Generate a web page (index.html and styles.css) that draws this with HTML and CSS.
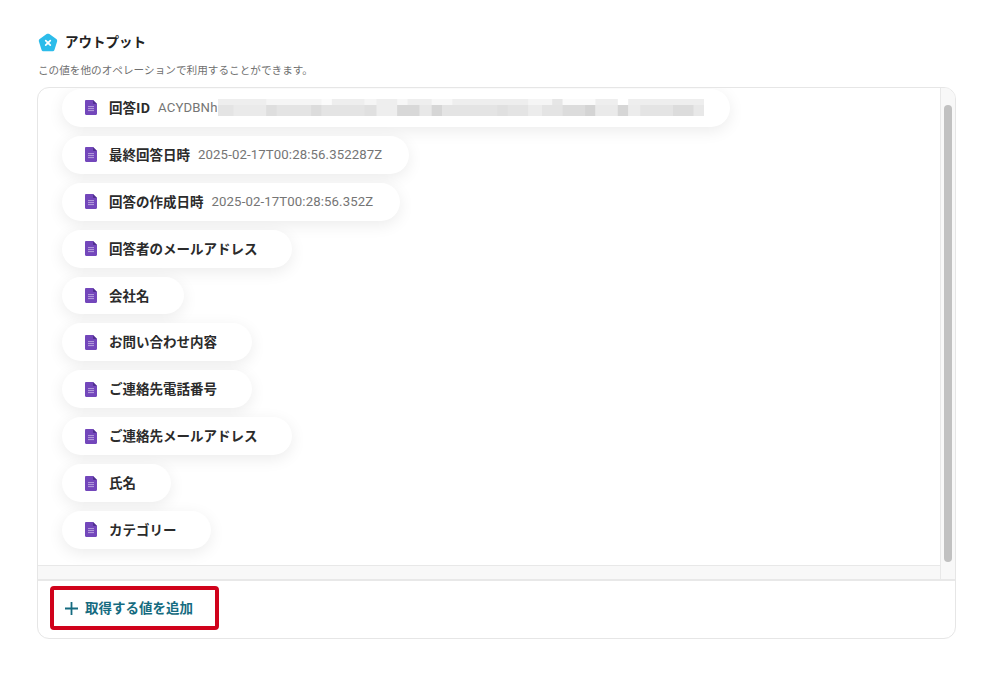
FILE: index.html
```html
<!DOCTYPE html>
<html lang="ja">
<head>
<meta charset="utf-8">
<title>アウトプット</title>
<link rel="stylesheet" href="styles.css">
</head>
<body>
<svg class="defs" width="0" height="0" aria-hidden="true">
  <symbol id="doc" viewBox="0 0 12 15">
    <path d="M1.2 0H8L12 4V13.8C12 14.5 11.5 15 10.8 15H1.2C.5 15 0 14.5 0 13.8V1.2C0 .5 .5 0 1.2 0Z" fill="#7347bb"/>
    <path d="M8 0L12 4H9C8.4 4 8 3.6 8 3Z" fill="#50308f"/>
    <path d="M3 6.600H9M3 8.600H9M3 10.600H9" stroke="#b7a2dc" stroke-width="1"/>
  </symbol>
</svg>
<main class="page">
  <header class="head">
    <svg class="logo" viewBox="0 0 20 20" width="20" height="20" aria-hidden="true">
      <path d="M8.600 1.100C9.400.5 10.600.5 11.400 1.100L18.300 6.100C19.100 6.700 19.400 7.700 19.100 8.600L16.500 16.700C16.200 17.600 15.300 18.300 14.300 18.300H5.700C4.700 18.300 3.800 17.600 3.500 16.700L.9 8.600C.6 7.700.9 6.700 1.700 6.100Z" fill="#2cbcea"/>
      <path d="M7.700 7.600L12.300 12.200M12.300 7.600L7.700 12.200" stroke="#fff" stroke-width="1.700" stroke-linecap="round"/>
    </svg>
    <h1 class="title">アウトプット</h1>
  </header>
  <p class="sub">この値を他のオペレーションで利用することができます。</p>
  <section class="box">
    <div class="scroll">
      <div class="main-col">
        <ul class="list">
          <li class="chip chip-secret"><svg class="ic"><use href="#doc"/></svg><b class="name">回答ID</b><span class="val">ACYDBNh</span>
            <svg class="mosaic" width="486" height="17" viewBox="0 0 1410 17" preserveAspectRatio="none" aria-hidden="true">
              <rect width="1410" height="6" fill="#eeeeee"/>
              <rect x="140" width="190" height="6" fill="#f5f5f5"/>
              <rect x="300" width="30" height="6" fill="#fbfbfb"/>
              <rect x="425" width="35" height="6" fill="#f5f5f5"/>
              <rect x="520" width="30" height="6" fill="#f7f7f7"/>
              <rect x="620" width="60" height="6" fill="#f7f7f7"/>
              <rect x="900" width="70" height="6" fill="#f5f5f5"/>
              <rect x="970" width="30" height="6" fill="#e6e6e6"/>
              <rect x="1000" width="95" height="6" fill="#fafafa"/>
              <rect x="1160" width="30" height="6" fill="#ffffff"/>
              <rect y="6" width="1410" height="11" fill="#e4e4e4"/>
              <rect x="45" y="6" width="95" height="11" fill="#eaeaea"/>
              <rect x="140" y="6" width="30" height="11" fill="#dedede"/>
              <rect x="270" y="6" width="30" height="11" fill="#dcdcdc"/>
              <rect x="425" y="6" width="35" height="11" fill="#e0e0e0"/>
              <rect x="460" y="6" width="60" height="11" fill="#eeeeee"/>
              <rect x="520" y="6" width="65" height="11" fill="#d8d8d8"/>
              <rect x="585" y="6" width="35" height="11" fill="#e8e8e8"/>
              <rect x="620" y="6" width="30" height="11" fill="#d6d6d6"/>
              <rect x="810" y="6" width="30" height="11" fill="#e0e0e0"/>
              <rect x="900" y="6" width="40" height="11" fill="#ececec"/>
              <rect x="1000" y="6" width="65" height="11" fill="#dcdcdc"/>
              <rect x="1065" y="6" width="30" height="11" fill="#d4d4d4"/>
              <rect x="1095" y="6" width="65" height="11" fill="#eaeaea"/>
              <rect x="1160" y="6" width="30" height="11" fill="#d6d6d6"/>
              <rect x="1190" y="6" width="35" height="11" fill="#ececec"/>
              <rect x="1320" y="6" width="60" height="11" fill="#dcdcdc"/>
              <rect x="1380" y="6" width="30" height="11" fill="#e8e8e8"/>
            </svg>
          </li>
          <li class="chip chip-val"><svg class="ic"><use href="#doc"/></svg><b class="name">最終回答日時</b><span class="val">2025-02-17T00:28:56.352287Z</span></li>
          <li class="chip chip-val"><svg class="ic"><use href="#doc"/></svg><b class="name">回答の作成日時</b><span class="val">2025-02-17T00:28:56.352Z</span></li>
          <li class="chip"><svg class="ic"><use href="#doc"/></svg><b class="name">回答者のメールアドレス</b></li>
          <li class="chip"><svg class="ic"><use href="#doc"/></svg><b class="name">会社名</b></li>
          <li class="chip"><svg class="ic"><use href="#doc"/></svg><b class="name">お問い合わせ内容</b></li>
          <li class="chip"><svg class="ic"><use href="#doc"/></svg><b class="name">ご連絡先電話番号</b></li>
          <li class="chip"><svg class="ic"><use href="#doc"/></svg><b class="name">ご連絡先メールアドレス</b></li>
          <li class="chip"><svg class="ic"><use href="#doc"/></svg><b class="name">氏名</b></li>
          <li class="chip"><svg class="ic"><use href="#doc"/></svg><b class="name">カテゴリー</b></li>
        </ul>
        <div class="htrack"></div>
      </div>
      <div class="vtrack"><div class="thumb"></div></div>
    </div>
    <div class="foot">
      <button class="add" type="button">
        <svg class="plus" viewBox="0 0 13 13" width="13" height="13" aria-hidden="true"><path d="M6.500 0V13M0 6.500H13" stroke="#156b80" stroke-width="1.800"/></svg>
        <span class="add-label">取得する値を追加</span>
      </button>
    </div>
  </section>
</main>
</body>
</html>
```

FILE: styles.css
```css
* { box-sizing: border-box; }
html, body { margin: 0; padding: 0; background: #fff; }
body {
  font-family: "Noto Sans CJK JP", "Noto Sans", sans-serif;
  color: #222;
}
.defs { position: absolute; }
.page {
  width: 1000px;
  height: 684px;
  padding: 32px 44px 0 37px;
  display: flex;
  flex-direction: column;
}
.head {
  display: flex;
  align-items: center;
  gap: 7px;
  height: 21px;
  padding-left: 1px;
}
.logo { flex: none; }
.title {
  margin: 0;
  padding-bottom: 2px;
  font-size: 13.500px;
  line-height: 19px;
  font-weight: 700;
  color: #222;
}
.sub {
  margin: 9px 0 9px 1px;
  font-size: 10.630px;
  line-height: 16px;
  color: #6f6f6f;
}
.box {
  height: 552px;
  border: 1px solid #e6e6e6;
  border-radius: 12px;
  overflow: hidden;
  display: flex;
  flex-direction: column;
}
.scroll {
  height: 493px;
  display: flex;
  border-bottom: 2px solid #e8e8e8;
}
.main-col {
  flex: 1;
  min-width: 0;
  display: flex;
  flex-direction: column;
  border-right: 1px solid #e8e8e8;
}
.list {
  list-style: none;
  flex: 1;
  margin: 0;
  padding: 1px 0 0 24px;
  display: flex;
  flex-direction: column;
  align-items: flex-start;
  gap: 9px;
  overflow: hidden;
}
.chip {
  height: 37.900px;
  padding: 0 34.500px 0 23px;
  display: flex;
  align-items: center;
  flex: none;
  border-radius: 19px;
  background: #fff;
  box-shadow: 0 4px 16px rgba(0, 0, 0, .08);
}
.chip-val { padding-right: 27px; }
.chip-secret { padding-right: 26px; }
.ic {
  width: 12px;
  height: 15px;
  flex: none;
  margin-right: 12px;
}
.name {
  padding-bottom: 2px;
  font-size: 13.500px;
  line-height: 20px;
  font-weight: 700;
  color: #2b2b2b;
}
.val {
  margin-left: 8px;
  font-family: Roboto, "Liberation Sans", sans-serif;
  font-size: 13.200px;
  letter-spacing: .12px;
  line-height: 20px;
  color: #757575;
}
.mosaic { flex: none; }
.htrack {
  height: 14px;
  flex: none;
  background: #f8f8f8;
  border-top: 1px solid #e8e8e8;
}
.vtrack {
  width: 14px;
  flex: none;
  padding: 17px 3px 17px 3px;
  background: #f8f8f8;
}
.thumb {
  height: 100%;
  border-radius: 4px;
  background: #c1c1c1;
}
.foot {
  flex: 1;
  padding: 5px 0 0 12px;
}
.add {
  width: 169px;
  height: 44px;
  padding: 0 0 0 11px;
  display: flex;
  align-items: center;
  gap: 7px;
  background: #fff;
  border: 4px solid #d0021b;
  border-radius: 4px;
  font-family: inherit;
  font-size: 13.500px;
  font-weight: 700;
  color: #156b80;
}
.add-label { padding-bottom: 2px; }
.plus { flex: none; }
```
